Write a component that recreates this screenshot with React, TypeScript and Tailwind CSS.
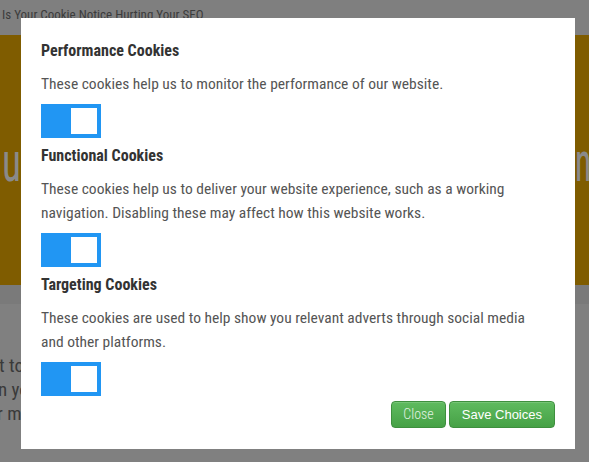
const cond: React.CSSProperties = { fontFamily: "Roboto, 'Liberation Sans', sans-serif", fontStretch: "condensed" };

function Toggle() {
  return (
    <div className="mt-[8px] flex h-[34px] w-[60px] justify-end bg-[#2196f3] p-[4px]">
      <div className="h-[26px] w-[26px] bg-white" />
    </div>
  );
}

function Section({ title, children, first }: { title: string; children: React.ReactNode; first?: boolean }) {
  return (
    <div className={first ? "" : "mt-[6px]"}>
      <h4 className="text-[16px] font-bold leading-[24px] text-[#333]">{title}</h4>
      <p className="mt-[9px] text-[15.5px] leading-[24px] text-[#555]">{children}</p>
      <Toggle />
    </div>
  );
}

export default function App() {
  return (
    <div className="relative h-[462px] w-[589px] overflow-hidden bg-[#808080]" style={cond}>
      {/* dimmed page behind */}
      <div className="flex h-[35px] items-start bg-[#7f7f7f] pl-[2px] pt-[7px]">
        <span className="text-[13px] leading-[16px] text-[#3c3c3c]">Is Your Cookie Notice Hurting Your SEO</span>
      </div>
      <div className="flex h-[250px] items-start justify-between overflow-hidden bg-[#7f5c00] pt-[95px]">
        <span className="ml-[2px] w-[19px] origin-left scale-x-[0.7] text-[56px] leading-[64px] text-[#8a8a8a]">u</span>
        <span className="w-[14px] overflow-visible whitespace-nowrap">
          <span className="inline-block origin-left scale-x-[0.6] text-[56px] leading-[64px] text-[#8a8a8a]">n</span>
        </span>
      </div>
      <div className="h-[19px] bg-[#7a7a7a]" />
      <div className="flex flex-col whitespace-nowrap pt-[50px] text-[19px] leading-[24px] text-[#3a3a3a]">
        <span className="-ml-[1px]">t to</span>
        <span className="-ml-[2px]">n yo</span>
        <span className="-ml-[3px]">r ma</span>
      </div>

      {/* modal */}
      <div className="absolute left-[21px] top-[18px] flex h-[431px] w-[554px] flex-col bg-white px-[20px] pt-[21px]">
        <Section title="Performance Cookies" first>
          These cookies help us to monitor the performance of our website.
        </Section>
        <Section title="Functional Cookies">
          These cookies help us to deliver your website experience, such as a working
          <br />
          navigation. Disabling these may affect how this website works.
        </Section>
        <Section title="Targeting Cookies">
          These cookies are used to help show you relevant adverts through social media
          <br />
          and other platforms.
        </Section>
        <div className="mt-[5px] flex justify-end gap-[3px]">
          <button
            className="h-[27px] rounded-[4px] border border-[#3e8f3e] bg-gradient-to-b from-[#5fbb5f] to-[#46a146] px-[11px] text-[14px] font-light text-[#e3f2e3] shadow-[inset_0_1px_0_rgba(255,255,255,0.15)]"
            style={cond}
          >
            Close
          </button>
          <button
            className="h-[27px] rounded-[4px] border border-[#3e8f3e] bg-gradient-to-b from-[#5fbb5f] to-[#46a146] px-[12px] text-[13px] text-white shadow-[inset_0_1px_0_rgba(255,255,255,0.15)]"
            style={{ fontFamily: "'Liberation Sans', Arial, sans-serif" }}
          >
            Save Choices
          </button>
        </div>
      </div>
    </div>
  );
}
